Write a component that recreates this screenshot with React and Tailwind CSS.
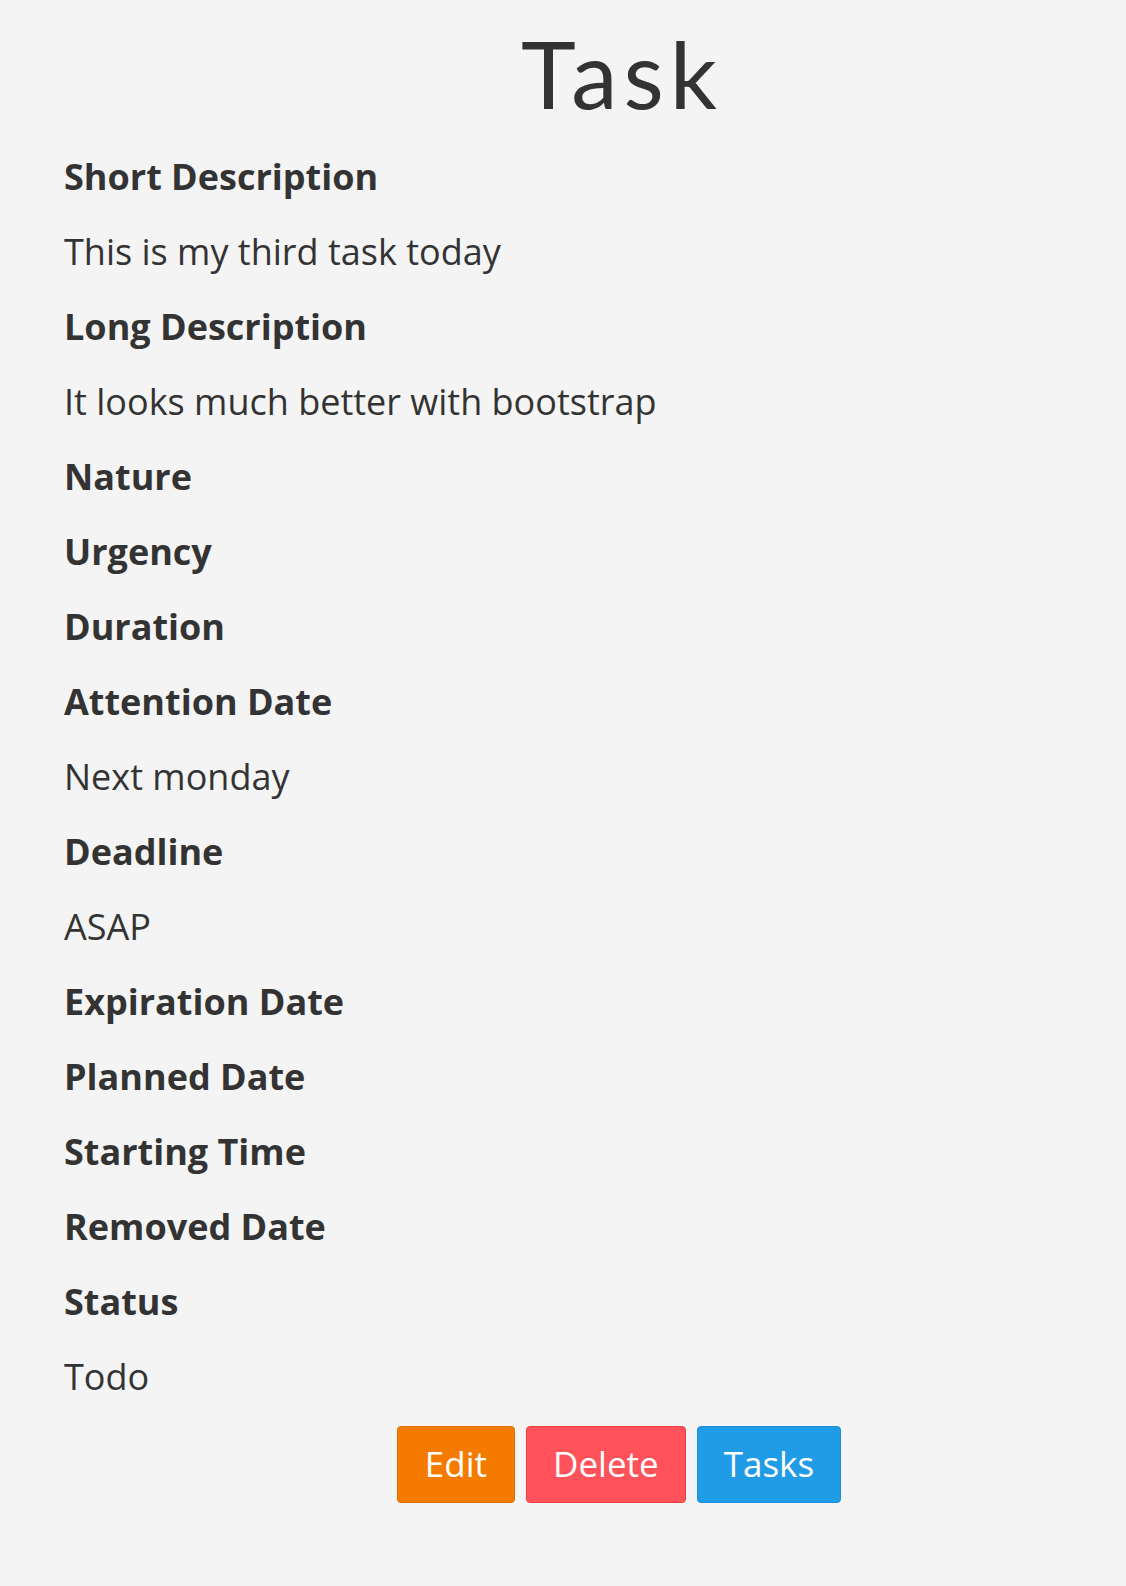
import React from 'react';

const rows = [
  { label: 'Short Description', value: 'This is my third task today' },
  { label: 'Long Description', value: 'It looks much better with bootstrap' },
  { label: 'Nature' },
  { label: 'Urgency' },
  { label: 'Duration' },
  { label: 'Attention Date', value: 'Next monday' },
  { label: 'Deadline', value: 'ASAP' },
  { label: 'Expiration Date' },
  { label: 'Planned Date' },
  { label: 'Starting Time' },
  { label: 'Removed Date' },
  { label: 'Status', value: 'Todo' },
];

export default function App() {
  return (
    <div className="min-h-[1586px] bg-[#f4f4f4] text-[#333333] font-['Open_Sans',sans-serif]">
      {/* Title */}
      <div className="pt-[27px] pl-[118px] text-center">
        <h1 className="font-['Lato',sans-serif] text-[93px] leading-none font-normal tracking-[6px]">Task</h1>
      </div>

      {/* Fields */}
      <dl className="mt-[19px] px-[64px] flex flex-col">
        {rows.map((row) => (
          <React.Fragment key={row.label}>
            <dt className="text-[36px] leading-[75px] font-bold">{row.label}</dt>
            {row.value && <dd className="text-[36px] leading-[75px]">{row.value}</dd>}
          </React.Fragment>
        ))}
      </dl>

      {/* Actions */}
      <div className="mt-[12px] pl-[112px] flex justify-center gap-[11px]">
        <button className="h-[77px] px-[27px] rounded-[4px] border border-[#e07000] bg-[#f47b00] text-white text-[35px]">
          Edit
        </button>
        <button className="h-[77px] px-[26px] rounded-[4px] border border-[#ec3f48] bg-[#ff525a] text-white text-[35px]">
          Delete
        </button>
        <button className="h-[77px] px-[26px] rounded-[4px] border border-[#1a8edb] bg-[#209ce6] text-white text-[35px]">
          Tasks
        </button>
      </div>
    </div>
  );
}
